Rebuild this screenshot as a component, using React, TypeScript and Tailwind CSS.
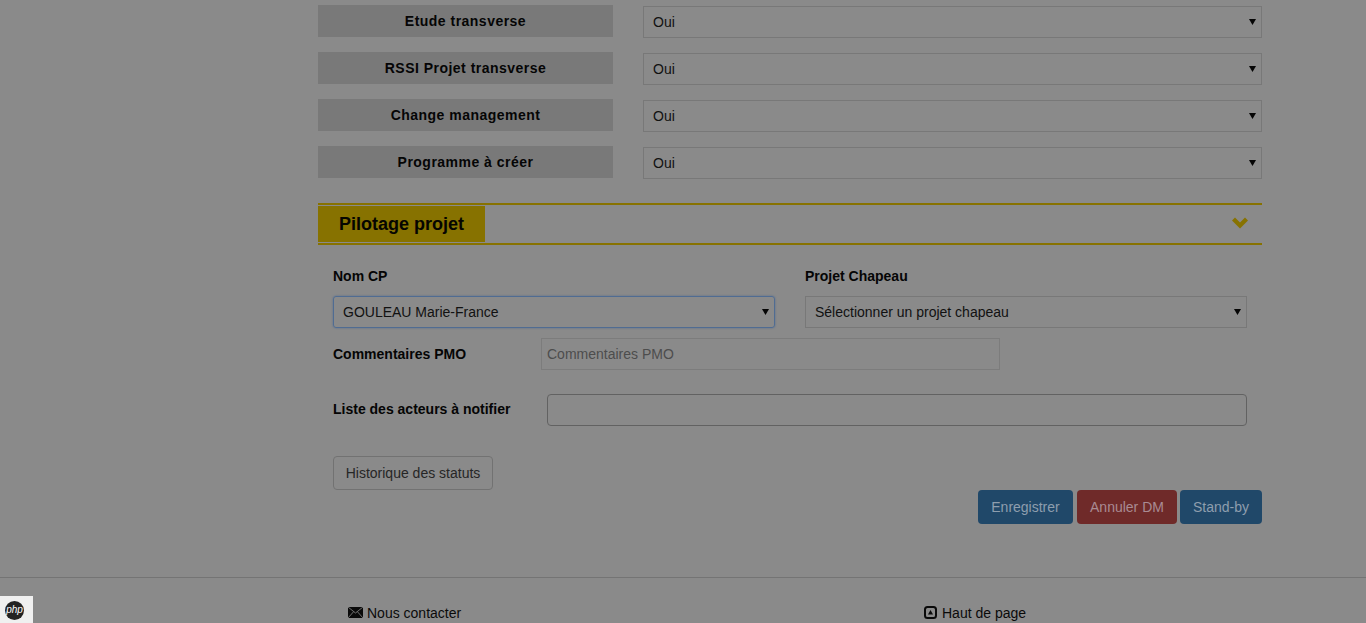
const rows = ["Etude transverse", "RSSI Projet transverse", "Change management", "Programme à créer"];

function Arrow({ className = "" }: { className?: string }) {
  return (
    <svg width="7" height="6" viewBox="0 0 7 6" className={`shrink-0 ${className}`} aria-hidden="true">
      <path d="M0 0h7L3.500 6z" fill="#050505" />
    </svg>
  );
}

function SelectBox({ value, className = "" }: { value: string; className?: string }) {
  return (
    <div className={`flex h-8 items-center justify-between border pl-[9px] pr-[5px] text-[14px] text-[#111111] ${className}`}>
      <span>{value}</span>
      <Arrow />
    </div>
  );
}

export default function App() {
  return (
    <div className="relative h-[623px] overflow-hidden bg-[#8a8a8a] font-['Liberation_Sans',Arial,sans-serif] text-[14px] leading-5 text-[#050505]">
      <div className="ml-[318px] w-[944px] pt-[5px]">
        {rows.map((label) => (
          <div key={label} className="mb-[14px] flex h-[33px] items-start">
            <div className="flex h-8 w-[295px] items-center justify-center bg-[#797979] font-bold tracking-[0.48px] text-[#050505]">
              {label}
            </div>
            <SelectBox value="Oui" className="ml-[30px] mt-px w-[619px] border-[#787878] pl-[9px]" />
          </div>
        ))}

        <div className="mt-[24px] flex h-[42px] items-center justify-between border-y-2 border-[#877200] py-px">
          <div className="flex h-full w-[167px] items-center bg-[#877200] pl-[21px] text-[18px] font-bold text-[#050500]">
            Pilotage projet
          </div>
          <svg width="16" height="12" viewBox="0 0 16 12" className="mb-[3px] mr-[14px]" aria-hidden="true">
            <path d="M0 3.500 3 .5 8 5.500 13 .5 16 3.500 8 11.500z" fill="#877200" />
          </svg>
        </div>

        <div className="px-[15px] pt-[21px]">
          <div className="flex">
            <div className="w-[442px]">
              <div className="font-bold">Nom CP</div>
              <SelectBox value="GOULEAU Marie-France" className="mt-[10px] rounded-[3px] border-[#506c92] shadow-[0_0_2px_#506c92]" />
            </div>
            <div className="ml-[30px] w-[442px]">
              <div className="font-bold">Projet Chapeau</div>
              <SelectBox value="Sélectionner un projet chapeau" className="mt-[10px] border-[#787878]" />
            </div>
          </div>

          <div className="mt-[10px] flex h-8 items-center">
            <div className="w-[208px] font-bold">Commentaires PMO</div>
            <input
              placeholder="Commentaires PMO"
              className="h-8 w-[459px] border border-[#7c7c7c] bg-transparent px-[5px] text-[14px] placeholder:text-[#4d4d4d]"
            />
          </div>

          <div className="mt-[24px] flex h-8 items-center">
            <div className="w-[214px] pb-[2px] font-bold">Liste des acteurs à notifier</div>
            <input className="h-8 w-[702px] rounded-[4px] border border-[#626262] bg-transparent" />
          </div>

          <button className="mt-[30px] block h-[34px] w-[160px] rounded-[4px] border border-[#727272] pb-[1px] text-center text-[14px] text-[#262626]">
            Historique des statuts
          </button>
        </div>

        <div className="flex justify-end">
          <button className="h-[34px] w-[95px] rounded-[4px] bg-[#204869] text-[14px] text-[#8e9eae]">Enregistrer</button>
          <button className="ml-[4px] h-[34px] w-[100px] rounded-[4px] bg-[#6f2a29] text-[14px] text-[#a98b93]">Annuler DM</button>
          <button className="ml-[3px] h-[34px] w-[82px] rounded-[4px] bg-[#204869] text-[14px] text-[#8e9eae]">Stand-by</button>
        </div>
      </div>

      <footer className="mt-[53px] flex border-t border-[#747474] pt-[25px] text-[#0a0a0a]">
        <div className="ml-[348px] flex w-[576px] items-center">
          <svg width="15" height="11" viewBox="0 0 15 11" className="mb-[1px] mr-[4px]" aria-hidden="true">
            <rect width="15" height="11" fill="#0a0a0a" />
            <path d="M0 0 7.500 6 15 0M0 11 5.500 4.800M15 11 9.500 4.800" fill="none" stroke="#8a8a8a" strokeWidth="0.8" />
          </svg>
          <span>Nous contacter</span>
        </div>
        <div className="flex items-center">
          <svg width="13" height="13" viewBox="0 0 13 13" className="mb-[1px] mr-[5px]" aria-hidden="true">
            <rect x="1" y="1" width="11" height="11" rx="2.500" fill="none" stroke="#0a0a0a" strokeWidth="2" />
            <path d="M6.500 4 9 8.500H4z" fill="#0a0a0a" />
          </svg>
          <span>Haut de page</span>
        </div>
      </footer>

      <div className="absolute bottom-0 left-0 flex h-[27px] w-[33px] items-center justify-start bg-[#f0f0f0] pl-[5px] pt-px">
        <div className="flex h-[19px] w-[19px] items-center justify-center rounded-full bg-[#232323] text-[10px] italic leading-none text-white">
          php
        </div>
      </div>
    </div>
  );
}
